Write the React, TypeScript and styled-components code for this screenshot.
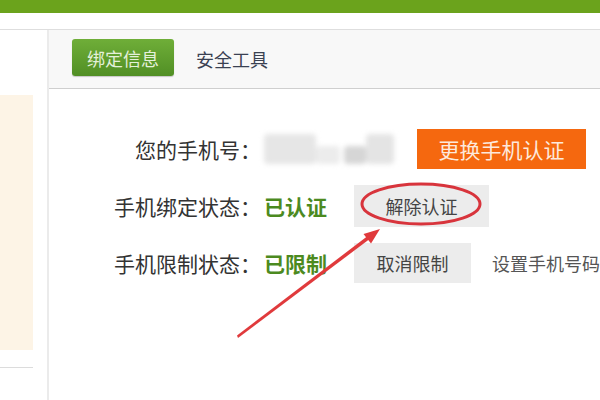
import React from "react";
import styled, { createGlobalStyle } from "styled-components";

const GlobalStyle = createGlobalStyle`
	html, body {
		margin: 0;
		padding: 0;
		background: #fff;
	}
	body {
		width: 600px;
		height: 400px;
		overflow: hidden;
		font-family: "Noto Sans CJK SC", "Liberation Sans", sans-serif;
	}
`;

const Page = styled.div`
	position: relative;
	width: 600px;
	height: 400px;
	display: flex;
	flex-direction: column;
`;

const GreenBar = styled.div`
	height: 13px;
	background: #6ba31c;
`;

const TopGap = styled.div`
	height: 16px;
	border-bottom: 1px solid #dedede;
`;

const Main = styled.div`
	flex: 1;
	display: flex;
`;

const Sidebar = styled.aside`
	width: 48px;
	border-right: 2px solid #ebebeb;
	padding-top: 65px;
	display: flex;
	flex-direction: column;
`;

const SideBox = styled.div`
	width: 33px;
	height: 255px;
	background: #fdf4e6;
`;

const SideLine = styled.div`
	width: 33px;
	height: 1px;
	margin-top: 17px;
	background: #dcdcdc;
`;

const Content = styled.section`
	flex: 1;
	display: flex;
	flex-direction: column;
`;

const TabBar = styled.nav`
	height: 58px;
	background: #f8f8f8;
	border-bottom: 1px solid #cfcfcf;
	padding-left: 23px;
	display: flex;
	align-items: center;
	gap: 22px;
`;

const Tab = styled.div<{ $active?: boolean }>`
	font-size: 18px;
	height: 37px;
	display: flex;
	align-items: center;
	justify-content: center;
	${(p) =>
		p.$active
			? `
		width: 102px;
		margin-top: -3px;
		border-radius: 3px;
		background: linear-gradient(#6fae38, #518f25);
		color: #e4f0da;
		box-shadow: 0 1px 1px rgba(0,0,0,0.2);
	`
			: `
		color: #3a4152;
	`}
`;

const Form = styled.div`
	padding-top: 31px;
	display: flex;
	flex-direction: column;
`;

const Row = styled.div`
	height: 57px;
	display: flex;
	align-items: center;
`;

const Label = styled.div`
	width: 212px;
	text-align: right;
	font-size: 21px;
	color: #333;
	white-space: nowrap;
`;

const Status = styled.div`
	width: 90px;
	margin-left: 3px;
	font-size: 21px;
	font-weight: bold;
	color: #4c8a1f;
`;

const Phone = styled.div`
	margin-left: 3px;
	width: 130px;
	height: 30px;
	display: flex;
	filter: blur(2.5px);
`;

const PhoneBlock = styled.div<{ $w: number; $c: string; $low?: boolean }>`
	width: ${(p) => p.$w}px;
	height: ${(p) => (p.$low ? "18px" : "30px")};
	margin-top: ${(p) => (p.$low ? "12px" : "0")};
	background: ${(p) => p.$c};
	border-radius: 4px;
`;

const OrangeButton = styled.div`
	margin-left: 23px;
	width: 169px;
	height: 40px;
	background: #f5680f;
	color: #fde9dc;
	font-size: 21px;
	display: flex;
	align-items: center;
	justify-content: center;
`;

const GrayButton = styled.div<{ $w: number; $h: number }>`
	width: ${(p) => p.$w}px;
	height: ${(p) => p.$h}px;
	background: #ececec;
	color: #444;
	font-size: 18px;
	display: flex;
	align-items: center;
	justify-content: center;
`;

const LinkText = styled.div`
	margin-left: 21px;
	font-size: 18px;
	color: #555;
	white-space: nowrap;
`;

const Annotation = styled.svg`
	position: absolute;
	left: 0;
	top: 0;
	pointer-events: none;
`;

export default function App() {
	return (
		<>
			<GlobalStyle />
			<Page>
				<GreenBar />
				<TopGap />
				<Main>
					<Sidebar>
						<SideBox />
						<SideLine />
					</Sidebar>
					<Content>
						<TabBar>
							<Tab $active>绑定信息</Tab>
							<Tab>安全工具</Tab>
						</TabBar>
						<Form>
							<Row>
								<Label>您的手机号：</Label>
								<Phone>
									<PhoneBlock $w={52} $c="#e6e6e6" />
									<PhoneBlock $w={24} $c="#ececec" $low />
									<PhoneBlock $w={4} $c="#fff" />
									<PhoneBlock $w={22} $c="#d6d6d6" $low />
									<PhoneBlock $w={28} $c="#e4e4e4" />
								</Phone>
								<OrangeButton>更换手机认证</OrangeButton>
							</Row>
							<Row>
								<Label>手机绑定状态：</Label>
								<Status>已认证</Status>
								<GrayButton $w={135} $h={42}>
									解除认证
								</GrayButton>
							</Row>
							<Row>
								<Label>手机限制状态：</Label>
								<Status>已限制</Status>
								<GrayButton $w={117} $h={40}>
									取消限制
								</GrayButton>
								<LinkText>设置手机号码</LinkText>
							</Row>
						</Form>
					</Content>
				</Main>
				<Annotation width="600" height="400" viewBox="0 0 600 400">
					<ellipse cx="421" cy="204" rx="59" ry="20" fill="none" stroke="#d8343c" strokeWidth="3" />
					<polygon points="238,338 237,335.5 367,236.5 369,239.5" fill="#e03a3c" />
					<polygon points="380,229 371,243.5 363.5,233.9" fill="#e03a3c" />
				</Annotation>
			</Page>
		</>
	);
}
